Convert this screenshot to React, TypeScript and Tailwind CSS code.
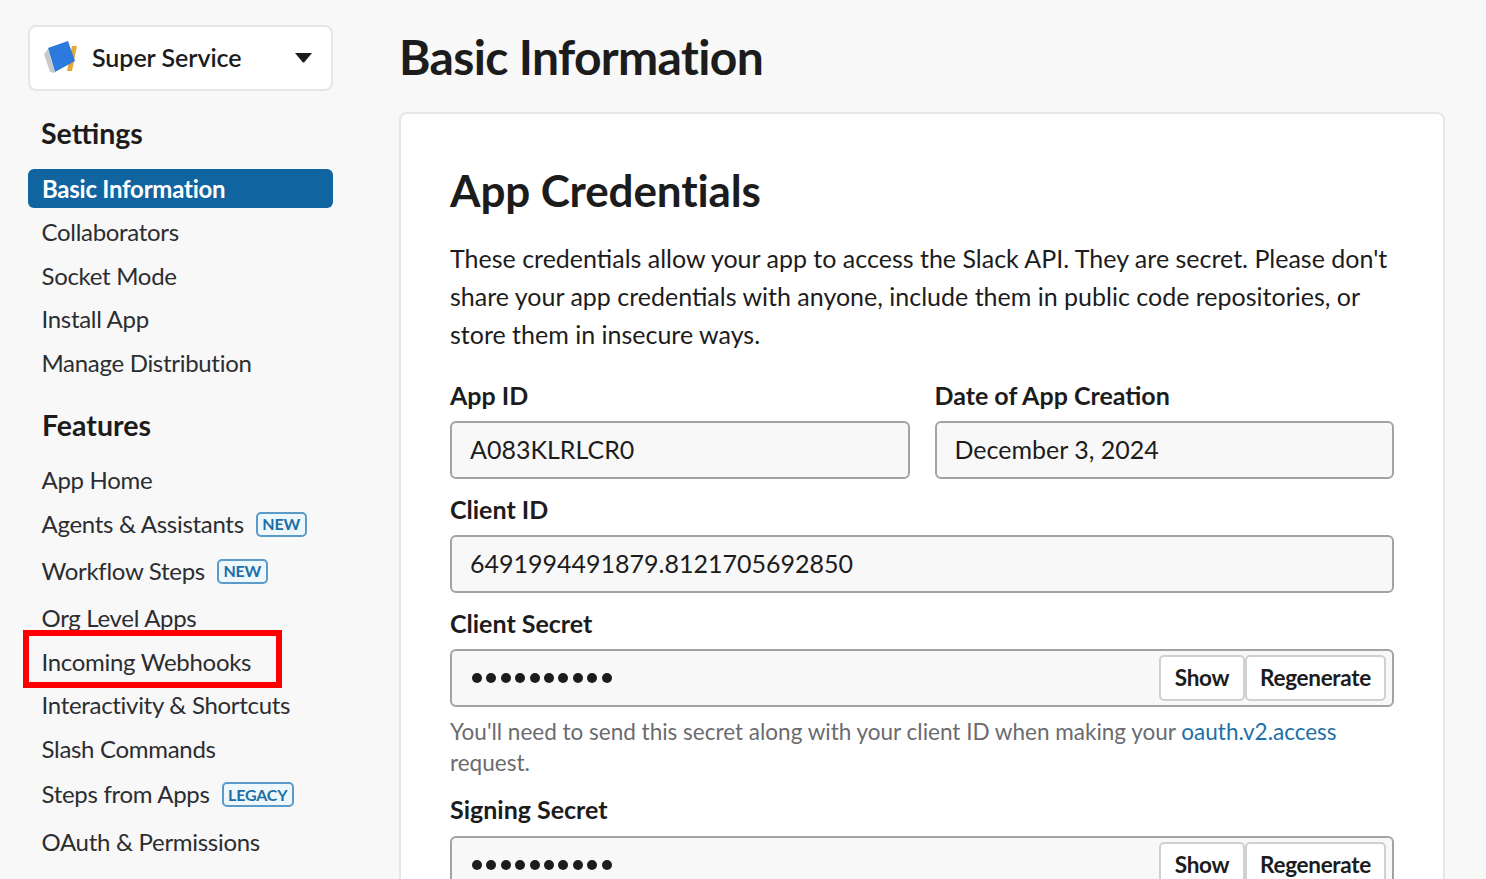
import React from "react";

const NavItem = ({ label, badge, h = "h-[43.75px]" }: { label: string; badge?: string; h?: string }) => (
  <div className={`${h} flex items-center pl-[13.5px] text-[24px] tracking-[-0.3px] text-[#2c2d30]`}>
    <span>{label}</span>
    {badge && (
      <span className="ml-[12px] mt-[1px] flex h-[25px] items-center rounded-[5px] border-2 border-[#5b9bc9] bg-[#eef7fb] px-[4.5px] text-[16px] font-bold tracking-[-0.2px] text-[#1d6fa5]">
        {badge}
      </span>
    )}
  </div>
);

const Field = ({ value }: { value: string }) => (
  <div className="flex h-[58px] items-center rounded-[6px] border-2 border-[#a3a3a3] bg-[#f8f8f8] pl-[18px] text-[25px] text-[#1d1c1d]">
    {value}
  </div>
);

const SecretField = () => (
  <div className="flex h-[58px] items-center justify-between rounded-[6px] border-2 border-[#a3a3a3] bg-[#f8f8f8] pl-[20px] pr-[6px]">
    <div className="flex gap-[4.4px]">
      {Array.from({ length: 10 }).map((_, i) => (
        <span key={i} className="h-[10px] w-[10px] rounded-full bg-[#1d1c1d]" />
      ))}
    </div>
    <div className="flex">
      <button className="h-[46px] w-[86px] rounded-[5px] border-2 border-[#d0d0d0] bg-white text-[22.5px] font-bold tracking-[-0.3px] text-[#1d1c1d]">
        Show
      </button>
      <button className="h-[46px] w-[141px] rounded-[5px] border-2 border-[#d0d0d0] bg-white text-[22.5px] font-bold tracking-[-0.3px] text-[#1d1c1d]">
        Regenerate
      </button>
    </div>
  </div>
);

const Label = ({ text, className = "" }: { text: string; className?: string }) => (
  <div className={`text-[25px] font-bold leading-[30px] text-[#1d1c1d] ${className}`}>{text}</div>
);

export default function App() {
  return (
    <div className="flex h-[879px] w-[1486px] overflow-hidden bg-[#f8f8f8] font-['Lato','Carlito','Open_Sans',sans-serif]">
      {/* sidebar */}
      <aside className="ml-[28px] mt-[25px] w-[305px] shrink-0">
        <div className="flex h-[66px] items-center rounded-[8px] border-2 border-[#e6e6e6] bg-white pl-[14px] pr-[19px]">
          <svg width="34" height="34" viewBox="0 0 34 34" className="shrink-0">
            <path d="M28 5 L33 5 L28 30 L23 30 Z" fill="#e5a93a" />
            <path d="M0 13 L4 8 L11 32 L6 31 Z" fill="#c9c9c9" />
            <path d="M4 7 L24 0 L31 20 L11 31 Z" fill="#2d79dd" />
          </svg>
          <span className="ml-[14px] text-[25px] font-semibold tracking-[-0.05px] text-[#1d1c1d]">Super Service</span>
          <svg width="17" height="10" viewBox="0 0 17 10" className="ml-auto">
            <path d="M0 0 H17 L9.5 9 Q8.5 10 7.5 9 Z" fill="#1d1c1d" />
          </svg>
        </div>

        <h2 className="mt-[24px] pl-[13px] text-[28.5px] font-bold leading-[36px] text-[#1d1c1d]">Settings</h2>
        <div className="mt-[18px] flex h-[39px] items-center rounded-[6px] bg-[#10649f] pl-[14px] text-[24px] font-bold tracking-[-0.25px] text-white">
          Basic Information
        </div>
        <div className="mt-[2px]">
          <NavItem label="Collaborators" />
          <NavItem label="Socket Mode" />
          <NavItem label="Install App" />
          <NavItem label="Manage Distribution" />
        </div>

        <h2 className="mt-[22px] pl-[14px] text-[28.5px] font-bold leading-[36px] text-[#1d1c1d]">Features</h2>
        <div className="mt-[15px]">
          <NavItem label="App Home" />
          <NavItem label="Agents & Assistants" badge="NEW" />
          <NavItem label="Workflow Steps" badge="NEW" h="h-[50.5px]" />
          <NavItem label="Org Level Apps" />
          <NavItem label="Incoming Webhooks" />
          <NavItem label="Interactivity & Shortcuts" />
          <NavItem label="Slash Commands" />
          <NavItem label="Steps from Apps" badge="LEGACY" h="h-[46px]" />
          <NavItem label="OAuth & Permissions" h="h-[50px]" />
          <NavItem label="Event Subscriptions" />
        </div>
      </aside>

      {/* main */}
      <main className="ml-[66px] w-[1046px] shrink-0">
        <h1 className="mt-[26px] text-[48px] font-bold leading-[62px] tracking-[-0.65px] text-[#1d1c1d]">Basic Information</h1>
        <section className="mt-[24px] rounded-[8px] border-2 border-[#e6e6e6] bg-white px-[49px] pt-[49px]">
          <h2 className="text-[44px] font-bold leading-[54px] tracking-[-0.13px] text-[#1d1c1d]">App Credentials</h2>
          <p className="mt-[22px] text-[25px] leading-[38px] text-[#1d1c1d]">
            These credentials allow your app to access the Slack API. They are secret. Please don't share your app credentials with anyone, include them in public code repositories, or store them in insecure ways.
          </p>
          <div className="mt-[27px] grid grid-cols-2 gap-x-[25px]">
            <div>
              <Label text="App ID" />
              <div className="mt-[11px]"><Field value="A083KLRLCR0" /></div>
            </div>
            <div>
              <Label text="Date of App Creation" />
              <div className="mt-[11px]"><Field value="December 3, 2024" /></div>
            </div>
          </div>
          <Label text="Client ID" className="mt-[15px]" />
          <div className="mt-[11px]"><Field value="6491994491879.8121705692850" /></div>
          <Label text="Client Secret" className="mt-[15px]" />
          <div className="mt-[11px]"><SecretField /></div>
          <p className="mt-[9px] text-[22.5px] leading-[31px] text-[#6b6b6f]">
            You'll need to send this secret along with your client ID when making your <span className="text-[#1d70a8]">oauth.v2.access</span> request.
          </p>
          <Label text="Signing Secret" className="mt-[16px]" />
          <div className="mt-[12px]"><SecretField /></div>
        </section>
      </main>

      {/* highlight annotation */}
      <div className="absolute left-[23px] top-[630px] h-[58px] w-[259px] border-[6px] border-[#ff0000]" />
    </div>
  );
}
